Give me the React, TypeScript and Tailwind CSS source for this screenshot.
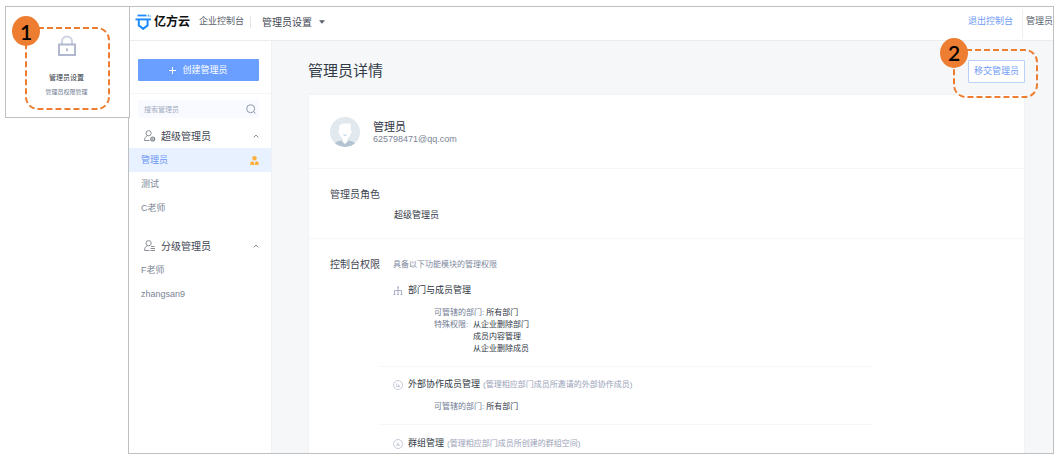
import { useState } from "react";
import type { ReactNode } from "react";

function StepMarker({ n }: { n: number }) {
  return (
    <span className="absolute -left-[13px] -top-[11px] flex h-[30px] w-7 items-center justify-center rounded-[50%] bg-[#ed7d31] font-['Lato',sans-serif] text-[21px] leading-none font-semibold text-black">
      {n}
    </span>
  );
}

function DashedFrame() {
  return (
    <svg className="absolute inset-0 h-full w-full overflow-visible" aria-hidden="true">
      <rect x="1" y="1" width="100%" height="100%" rx="12" fill="none" stroke="#ed7d31" strokeWidth="2" strokeDasharray="6 3" />
    </svg>
  );
}

function LockIcon() {
  return (
    <svg width="20" height="22" viewBox="0 0 20 22" fill="none" aria-hidden="true">
      <path d="M5 9V6.500a5 5 0 0 1 10 0V9" stroke="#ced3e3" strokeWidth="2" />
      <rect x="2" y="9.500" width="16" height="10.500" stroke="#b0b7ce" strokeWidth="2" />
      <rect x="9" y="13.500" width="2" height="2.500" fill="#b0b7ce" />
    </svg>
  );
}

function LogoMark() {
  return (
    <svg width="17" height="17" viewBox="0 0 17 17" fill="none" aria-hidden="true">
      <path d="M2.500 1.500h9" stroke="#1b8bff" strokeWidth="1.800" />
      <path d="M13.200 2.700V1.200h1M15.200 2.700V1.400" stroke="#1b8bff" strokeWidth="0.900" />
      <path d="M0.500 5.400h15.500" stroke="#1b8bff" strokeWidth="1.900" />
      <path d="M3.800 6v5.400l4.400 3.400 4.400-3.400V6" stroke="#1b8bff" strokeWidth="2" />
      <path d="M6.300 13.200l2 1.500 2-1.500" stroke="#1b8bff" strokeWidth="1.600" />
    </svg>
  );
}

function AdminIcon({ kind }: { kind: "gear" | "list" }) {
  return (
    <svg width="12" height="12" viewBox="0 0 12 12" fill="none" stroke="#7d828c" strokeWidth="0.900" aria-hidden="true">
      <circle cx="4.600" cy="3.200" r="2.600" />
      <path d="M5.500 10.500H0.600c0-2.600 1-4 2.700-4.700" />
      {kind === "gear" ? (
        <>
          <circle cx="8.700" cy="8.900" r="1.900" strokeWidth="1.200" />
          <circle cx="8.700" cy="8.900" r="0.500" />
        </>
      ) : (
        <path d="M7 6.500h3.500M6.500 8.500h4.500M6.500 10.500h4.500" />
      )}
    </svg>
  );
}

function Avatar() {
  return (
    <svg width="30" height="30" viewBox="0 0 30 30" aria-hidden="true">
      <defs>
        <clipPath id="avatar-disc">
          <circle cx="15" cy="15" r="15" />
        </clipPath>
      </defs>
      <g clipPath="url(#avatar-disc)">
        <rect width="30" height="30" fill="#e1e8ee" />
        <path d="M3 30c1-4.500 4-6 9.500-6.500h5C23 24 26 25.500 27 30z" fill="#b4c4d3" />
        <path d="M9 9.500c1-2 3-3 5.500-3h6.200v6.700c1.200 0 1.600 2.800 0 3.300-.4 2.300-1.700 4-3.200 5v3.200L15 27l-2.500-2.300v-3.200c-1.500-1-2.800-2.700-3.200-5-1.600-.5-1.200-3.300 0-3.300z" fill="#fff" />
        <path d="M13 17.500h4c-.3 1.700-3.700 1.700-4 0z" fill="#b9d3e3" />
      </g>
    </svg>
  );
}

function OrgIcon() {
  return (
    <svg width="10" height="10" viewBox="0 0 10 10" fill="none" stroke="#a9b0c8" aria-hidden="true">
      <path d="M5 1v7M1.500 8V4.500h7V8" />
      <path d="M4 1h2M0.500 8.500h2M4 8.500h2M7.500 8.500h2" />
    </svg>
  );
}

function CircleIcon({ kind }: { kind: "member" | "group" }) {
  return (
    <svg width="10" height="10" viewBox="0 0 10 10" fill="none" stroke="#b9bed2" strokeWidth="0.800" aria-hidden="true">
      <circle cx="5" cy="5" r="4.500" />
      {kind === "member" ? <path d="M3 6.500h4M3.700 3.300v2.500M5.500 4.500v1.300h1" /> : <path d="M2.800 6.200h4.400M5 3.600v1.600M4 5h2" />}
    </svg>
  );
}

function Chevron() {
  return (
    <svg width="6" height="4" viewBox="0 0 6 4" fill="none" stroke="#7d828c" aria-hidden="true">
      <path d="M0.700 3.400L3 1.100l2.300 2.300" />
    </svg>
  );
}

function PersonBadge() {
  return (
    <svg width="9" height="9" viewBox="0 0 9 9" fill="#fbb03b" aria-hidden="true">
      <circle cx="4.500" cy="2.300" r="2.200" />
      <path d="M0.300 9V7.500C0.300 6 1.300 5.200 3 5.200L4.200 7v2zM8.700 9V7.500c0-1.500-1-2.300-2.700-2.300L4.800 7v2z" />
    </svg>
  );
}

function SidebarGroup({
  title,
  kind,
  names,
  selected,
  onSelect,
}: {
  title: string;
  kind: "gear" | "list";
  names: string[];
  selected: string;
  onSelect: (name: string) => void;
}) {
  const [open, setOpen] = useState(true);
  return (
    <section>
      <button
        type="button"
        aria-expanded={open}
        onClick={() => setOpen(!open)}
        className="flex h-6 w-full items-center pr-3 pl-[15px] text-[10px] text-[#3f4652]"
      >
        <AdminIcon kind={kind} />
        <span className="mr-auto ml-[5px]">{title}</span>
        <Chevron />
      </button>
      {open && (
        <ul>
          {names.map((name) => (
            <li key={name}>
              <button
                type="button"
                onClick={() => onSelect(name)}
                className={
                  name === selected
                    ? "flex h-6 w-full items-center justify-between bg-[#e8f1ff] pt-px pr-3 pl-3 text-[9px] text-[#6a93f7]"
                    : "flex h-6 w-full items-center justify-between pt-px pr-3 pl-3 text-[9px] text-[#7b8495]"
                }
              >
                {name}
                {name === selected && <PersonBadge />}
              </button>
            </li>
          ))}
        </ul>
      )}
    </section>
  );
}

function ModuleTitle({ icon, title, note }: { icon: ReactNode; title: string; note?: string }) {
  return (
    <h3 className="flex h-3 items-center pl-[14px] text-[9px] text-[#2f3744]">
      {icon}
      <span className="ml-[5px]">{title}</span>
      {note && <span className="ml-[3px] text-[8px] text-[#9aa2b8]">{note}</span>}
    </h3>
  );
}

function Scope({ label, values }: { label: string; values: string[] }) {
  return (
    <div className="flex pl-[55px] text-[8px] leading-3">
      <dt className="min-w-[37px] text-[#707b93]">{label}</dt>
      <dd className="ml-[2px] text-[#2f3744]">
        {values.map((v) => (
          <div key={v}>{v}</div>
        ))}
      </dd>
    </div>
  );
}

export default function App() {
  const [selected, setSelected] = useState("管理员");

  return (
    <div className="flex h-screen items-start bg-white pt-[6px] pr-[7px] pb-1 pl-[5px] font-['Liberation_Sans','Noto_Sans_CJK_SC',sans-serif] whitespace-nowrap">
      <aside className="z-10 -mr-[2px] w-[125px] shrink-0 border border-[#bfbfbf] bg-white pt-5 pb-[9px] pl-[19px]">
        <div className="relative flex h-[81px] w-[83px] flex-col items-center pt-2">
          <DashedFrame />
          <LockIcon />
          <h2 className="mt-[15px] text-[7px] leading-3 text-[#2f3744]">管理员设置</h2>
          <p className="mt-[2px] text-[6px] leading-3 text-[#707b93]">管理员权限管理</p>
          <StepMarker n={1} />
        </div>
      </aside>

      <div className="flex h-full min-w-0 flex-1 flex-col overflow-hidden border border-[#bfbfbf] bg-white">
        <header className="flex h-[34px] shrink-0 items-center border-b border-[#ebecee] pb-[3px] pl-[6px]">
          <LogoMark />
          <span className="ml-[2px] text-[12px] font-bold text-[#111]">亿方云</span>
          <span className="ml-[9px] text-[9px] text-[#59616e]">企业控制台</span>
          <span className="mx-[6px] h-3 w-px bg-[#e3e5e9]" />
          <button type="button" className="ml-[5px] flex items-center gap-[7px] text-[10px] text-[#3f4652]">
            管理员设置
            <svg width="6" height="4" viewBox="0 0 6 4" fill="#59616e" aria-hidden="true">
              <path d="M0 0.300h6L3 3.800z" />
            </svg>
          </button>
          <a href="#exit" className="ml-auto text-[9px] text-[#6f9bf8]">退出控制台</a>
          <span className="-mb-[3px] ml-[9px] h-full w-px bg-[#efeff1]" />
          <span className="ml-[3px] text-[9px] text-[#59616e]">管理员</span>
        </header>

        <div className="flex min-h-0 flex-1">
          <nav className="w-[143px] shrink-0 border-r border-[#eff1f5] bg-white pt-[18px]">
            <div className="border-b border-[#f4f5f7] pr-3 pb-3 pl-[9px]">
              <button type="button" className="flex h-[22px] w-full items-center justify-center gap-[6px] rounded-[1px] bg-[#6b9fff] pt-px text-[9px] text-white">
                <svg width="7" height="7" viewBox="0 0 7 7" stroke="#fff" aria-hidden="true">
                  <path d="M3.500 0v7M0 3.500h7" />
                </svg>
                创建管理员
              </button>
            </div>
            <div className="pt-[6px] pr-3 pb-[6px] pl-[9px]">
              <div className="flex h-[18px] items-center bg-[#f8faff] pr-[3px] pl-[6px]">
                <input
                  type="text"
                  aria-label="搜索管理员"
                  placeholder="搜索管理员"
                  className="h-full min-w-0 flex-1 bg-transparent text-[7px] text-[#59616e] outline-none placeholder:text-[#a3acc0]"
                />
                <svg width="10" height="10" viewBox="0 0 10 10" fill="none" stroke="#8f98a8" aria-hidden="true">
                  <circle cx="4.700" cy="4.700" r="4" />
                  <path d="M7.500 7.500l2 2" />
                </svg>
              </div>
            </div>
            <SidebarGroup title="超级管理员" kind="gear" names={["管理员", "测试", "C老师"]} selected={selected} onSelect={setSelected} />
            <div className="h-[14px]" />
            <SidebarGroup title="分级管理员" kind="list" names={["F老师", "zhangsan9"]} selected={selected} onSelect={setSelected} />
          </nav>

          <main className="flex min-w-0 flex-1 flex-col bg-[#f5f7f9] pt-[18px] pr-7 pl-9">
            <div className="flex items-center justify-between">
              <h1 className="text-[15px] leading-6 text-[#323b47]">管理员详情</h1>
              <div className="relative">
                <button type="button" className="block h-[23px] w-[57px] rounded-[1px] border border-[#b9d0fb] bg-white pt-px text-[9px] text-[#6f9bf8]">
                  移交管理员
                </button>
                <div className="pointer-events-none absolute -top-[11px] -left-[15px] h-[47px] w-[83px]">
                  <DashedFrame />
                  <StepMarker n={2} />
                </div>
              </div>
            </div>

            <article className="mt-[11px] min-h-0 flex-1 overflow-hidden border border-b-0 border-[#f0f2f4] bg-white">
              <section className="flex h-[74px] items-center border-b border-[#f6f7f8] pl-[21px]">
                <Avatar />
                <div className="ml-[13px] pt-[2px]">
                  <h2 className="text-[11px] leading-3 text-[#2f3744]">管理员</h2>
                  <p className="text-[9px] leading-3 text-[#7b8495]">625798471@qq.com</p>
                </div>
              </section>

              <section className="h-[70px] border-b border-[#f6f7f8] pt-[18px] pl-[21px]">
                <h2 className="text-[10px] leading-4 text-[#3f4652]">管理员角色</h2>
                <p className="mt-1 pl-16 text-[9px] leading-4 text-[#2f3744]">超级管理员</p>
              </section>

              <section className="flex pt-[18px] pl-[21px]">
                <h2 className="w-[49px] shrink-0 text-[10px] leading-4 text-[#3f4652]">控制台权限</h2>
                <div className="mr-[151px] min-w-0 flex-1">
                  <p className="pl-[14px] text-[8px] leading-4 text-[#7f89a0]">具备以下功能模块的管理权限</p>
                  <div className="border-b border-[#f6f7f8] pt-3 pb-[11px]">
                    <ModuleTitle icon={<OrgIcon />} title="部门与成员管理" />
                    <dl className="mt-[10px]">
                      <Scope label="可管辖的部门:" values={["所有部门"]} />
                      <Scope label="特殊权限:" values={["从企业删除部门", "成员内容管理", "从企业删除成员"]} />
                    </dl>
                  </div>
                  <div className="border-b border-[#f6f7f8] pt-3 pb-[11px]">
                    <ModuleTitle icon={<CircleIcon kind="member" />} title="外部协作成员管理" note="(管理相应部门成员所邀请的外部协作成员)" />
                    <dl className="mt-[10px]">
                      <Scope label="可管辖的部门:" values={["所有部门"]} />
                    </dl>
                  </div>
                  <div className="pt-[13px]">
                    <ModuleTitle icon={<CircleIcon kind="group" />} title="群组管理" note="(管理相应部门成员所创建的群组空间)" />
                  </div>
                </div>
              </section>
            </article>
          </main>
        </div>
      </div>
    </div>
  );
}
